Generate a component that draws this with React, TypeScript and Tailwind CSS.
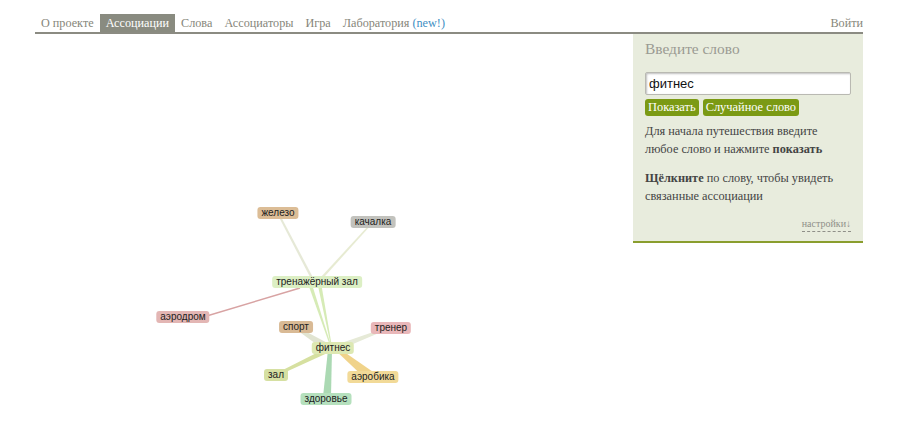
import React from 'react';

type Node = { id: string; label: string; x: number; y: number; bg: string };

// centre coordinates on the canvas (canvas origin = page 35,34)
const OX = 35;
const OY = 34;

const nodes: Node[] = [
  { id: 'zhelezo', label: 'железо', x: 278, y: 213, bg: 'bg-[#dcbd96]' },
  { id: 'kachalka', label: 'качалка', x: 373, y: 222, bg: 'bg-[#c2c2bd]' },
  { id: 'trenzal', label: 'тренажёрный зал', x: 317, y: 282, bg: 'bg-[#dcefc4]' },
  { id: 'aerodrom', label: 'аэродром', x: 183, y: 317, bg: 'bg-[#e3b6b4]' },
  { id: 'sport', label: 'спорт', x: 296, y: 327, bg: 'bg-[#d9ba95]' },
  { id: 'trener', label: 'тренер', x: 391, y: 328, bg: 'bg-[#e9b7b9]' },
  { id: 'fitnes', label: 'фитнес', x: 333, y: 348, bg: 'bg-[#dde8b2]' },
  { id: 'zal', label: 'зал', x: 276, y: 375, bg: 'bg-[#d6e0a2]' },
  { id: 'aerobika', label: 'аэробика', x: 373, y: 377, bg: 'bg-[#f2da98]' },
  { id: 'zdorovie', label: 'здоровье', x: 326, y: 399, bg: 'bg-[#b5e0bd]' },
];

// tapered edges: [x1, y1, x2, y2, width at 1, width at 2, colour]
const edges: [number, number, number, number, number, number, string][] = [
  [314, 282, 280, 217, 2.5, 2, '#e6e9d7'],
  [318, 282, 370, 225, 2.5, 1.5, '#e7ebd2'],
  [300, 288, 200, 318, 1.5, 1.5, '#d8a3a3'],
  [311, 287, 330, 344, 3.5, 1, '#d6ebb6'],
  [320, 287, 331, 344, 3.5, 1, '#d6ebb6'],
  [330, 349, 298, 329, 8, 3, '#e1e4d1'],
  [336, 348, 388, 328, 6, 2, '#e6ead7'],
  [328, 350, 278, 374, 5, 3, '#d6e0a0'],
  [338, 350, 370, 376, 4, 10, '#f0d38a'],
  [330, 350, 327, 397, 4, 8, '#abd9b3'],
];

function wedge(e: (typeof edges)[number]) {
  const [x1, y1, x2, y2, w1, w2] = e;
  const dx = x2 - x1;
  const dy = y2 - y1;
  const len = Math.hypot(dx, dy) || 1;
  const nx = -dy / len;
  const ny = dx / len;
  const p = [
    [x1 + (nx * w1) / 2, y1 + (ny * w1) / 2],
    [x2 + (nx * w2) / 2, y2 + (ny * w2) / 2],
    [x2 - (nx * w2) / 2, y2 - (ny * w2) / 2],
    [x1 - (nx * w1) / 2, y1 - (ny * w1) / 2],
  ];
  return p.map(([a, b]) => `${a - OX},${b - OY}`).join(' ');
}

const tabs = ['О проекте', 'Ассоциации', 'Слова', 'Ассоциаторы', 'Игра'];

export default function App() {
  return (
    <div className="w-[900px] h-[447px] overflow-hidden bg-white font-['Liberation_Serif',serif]">
      <div className="ml-[35px] w-[828px]">
        <nav className="flex items-end pt-[14px] border-b-2 border-[#8b8b82] text-[12.2px] leading-[18px]">
          {tabs.map((t) => (
            <span
              key={t}
              className={
                t === 'Ассоциации'
                  ? 'px-[6px] h-[18px] bg-[#898b80] text-white'
                  : 'px-[6px] h-[18px] text-[#86867a]'
              }
            >
              {t}
            </span>
          ))}
          <span className="px-[6px] h-[18px] text-[#86867a]">
            Лаборатория <span className="text-[#3f8fc4]">(new!)</span>
          </span>
          <span className="ml-auto h-[18px] text-[#86867a]">Войти</span>
        </nav>

        <div className="flex">
          <div className="relative flex-1 h-[411px]">
            <svg className="absolute inset-0" width="598" height="411">
              {edges.map((e, i) => (
                <polygon key={i} points={wedge(e)} fill={e[6]} />
              ))}
            </svg>
            {nodes.map((n) => (
              <div
                key={n.id}
                className={`absolute -translate-x-1/2 -translate-y-1/2 whitespace-nowrap rounded-[3px] px-[4px] h-[12px] leading-[12px] text-[10px] text-[#222] font-['Liberation_Sans',Arial,sans-serif] ${n.bg}`}
                style={{ left: n.x - OX, top: n.y - OY }}
              >
                {n.label}
              </div>
            ))}
          </div>

          <aside className="w-[230px] self-start bg-[#e8ecdd] border-b-2 border-[#8a9e2e] px-[12px] pt-[5px] pb-[9px] text-[12.3px] text-[#444]">
            <div className="text-[15.4px] leading-[20px] text-[#9a9a92]">Введите слово</div>
            <input
              readOnly
              value="фитнес"
              className="mt-[13px] block w-[206px] h-[23px] rounded-[2px] border border-[#b9b9b2] bg-white px-[3px] text-[13px] text-[#111] shadow-[inset_1px_1px_2px_rgba(0,0,0,0.25)] font-['Liberation_Sans',Arial,sans-serif] outline-none"
            />
            <div className="mt-[4px] flex gap-[4px]">
              <button className="h-[17px] rounded-[3px] bg-[#7b9a14] px-[3px] text-[12.4px] leading-[17px] text-white">
                Показать
              </button>
              <button className="h-[17px] rounded-[3px] bg-[#7b9a14] px-[3px] text-[12.4px] leading-[17px] text-white">
                Случайное слово
              </button>
            </div>
            <p className="mt-[6px] leading-[18px]">
              Для начала путешествия введите любое слово и нажмите <b>показать</b>
            </p>
            <p className="mt-[11px] leading-[18px]">
              <b>Щёлкните</b> по слову, чтобы увидеть связанные ассоциации
            </p>
            <div className="mt-[13px] flex justify-end">
              <span className="text-[10px] leading-[12px] text-[#8f8f88] border-b border-dashed border-[#8f8f88] pb-[1px]">
                настройки↓
              </span>
            </div>
          </aside>
        </div>
      </div>
    </div>
  );
}
